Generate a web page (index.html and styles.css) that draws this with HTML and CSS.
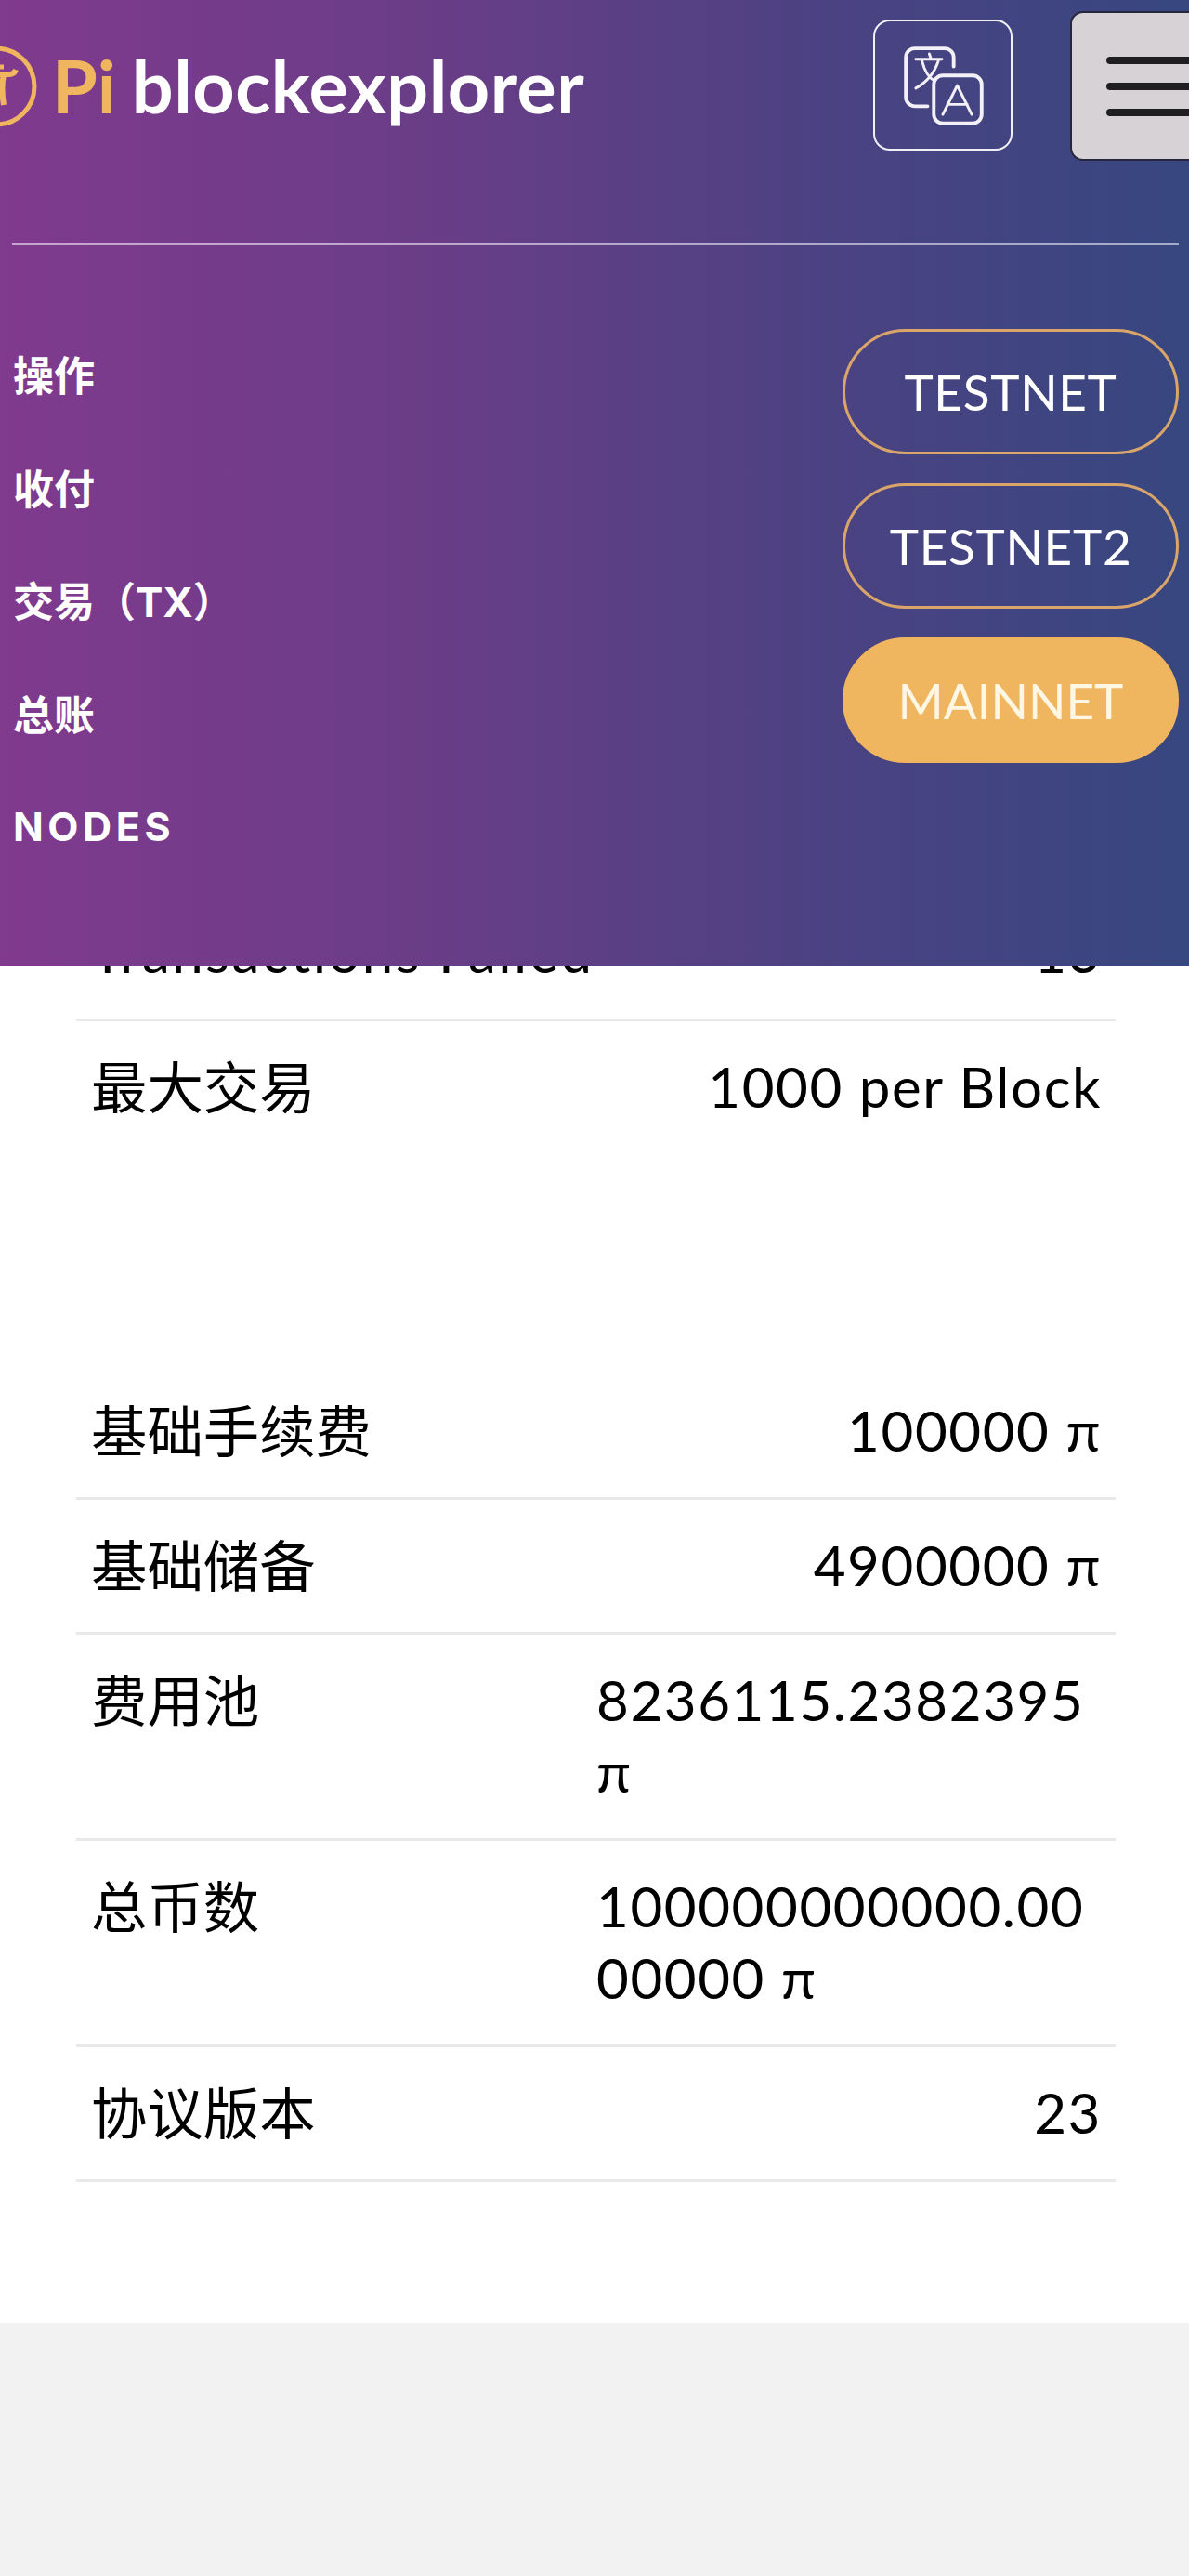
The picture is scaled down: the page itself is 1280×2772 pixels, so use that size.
FILE: index.html
```html
<!DOCTYPE html>
<html lang="zh">
<head>
<meta charset="utf-8">
<title>Pi blockexplorer</title>
<link rel="stylesheet" href="styles.css">
</head>
<body>
<header class="header">
  <div class="topbar">
    <a class="logo">
      <svg class="coin" viewBox="0 0 40 88" width="40" height="88">
        <g fill="none" stroke="#f0b55f">
          <circle cx="-4" cy="44" r="41" stroke-width="5"/>
          <path d="M-6 31H10C14 31 16 29 17 26" stroke-width="6"/>
          <path d="M4 31C2 40 2 52 4 64" stroke-width="6"/>
          <path d="M-4 23H4" stroke-width="5"/>
        </g>
      </svg>
      <span class="logo-pi">Pi</span>
      <span class="logo-name">blockexplorer</span>
    </a>
    <button class="lang" aria-label="language">
      <svg viewBox="0 0 150 141" width="146" height="137">
        <g fill="none" stroke="#f3f0f8" stroke-linecap="round" stroke-linejoin="round">
          <path d="M58 94H44a10 10 0 0 1-10-10V40a10 10 0 0 1 10-10H77a10 10 0 0 1 10 10V50" stroke-width="4"/>
          <rect x="65" y="60" width="53" height="53" rx="10" stroke-width="4"/>
          <path d="M75 103L91 71L107 103M80 92H102" stroke-width="3"/>
          <path d="M45 42H74M60 36L62 42M52 44C55 56 60 63 66 66M70 44C66 56 58 67 45 74" stroke-width="3"/>
        </g>
      </svg>
    </button>
    <button class="burger" aria-label="menu">
      <span class="bar"></span><span class="bar"></span><span class="bar"></span>
    </button>
  </div>
  <div class="rule"></div>
  <div class="menu">
    <nav class="links">
      <a class="link">操作</a>
      <a class="link">收付</a>
      <a class="link">交易（TX）</a>
      <a class="link">总账</a>
      <a class="link link-latin">NODES</a>
    </nav>
    <div class="nets">
      <a class="net">TESTNET</a>
      <a class="net">TESTNET2</a>
      <a class="net net-active">MAINNET</a>
    </div>
  </div>
</header>
<main class="main">
  <section class="card card-first">
    <div class="row"><span class="label label-latin">Transactions Failed</span><span class="value">13</span></div>
    <div class="row row-plain"><span class="label">最大交易</span><span class="value">1000 per Block</span></div>
  </section>
  <section class="card card-second">
    <div class="row"><span class="label">基础手续费</span><span class="value">100000 π</span></div>
    <div class="row"><span class="label">基础储备</span><span class="value">4900000 π</span></div>
    <div class="row"><span class="label">费用池</span><span class="value">8236115.2382395 π</span></div>
    <div class="row"><span class="label">总币数</span><span class="value">100000000000.0000000 π</span></div>
    <div class="row"><span class="label">协议版本</span><span class="value">23</span></div>
  </section>
</main>
</body>
</html>
```

FILE: styles.css
```css
* { box-sizing: border-box; }
html, body { margin: 0; padding: 0; }
body {
  background: #f2f2f2;
  color: #000;
  font-family: Lato, "Noto Sans CJK SC", sans-serif;
  overflow: hidden;
}
.header {
  position: absolute;
  top: 0;
  left: 0;
  width: 1280px;
  height: 1039px;
  overflow: hidden;
  background: linear-gradient(90deg, #803a8e 0%, #6a3d87 35%, #4b4282 70%, #37477f 100%);
}
.topbar {
  display: flex;
  align-items: flex-start;
  height: 262px;
}
.logo {
  display: flex;
  align-items: baseline;
  margin-top: 44px;
  font-size: 79px;
  font-weight: 700;
  line-height: 96px;
}
.coin { align-self: flex-start; margin-top: 5px; margin-right: 16px; }
.logo-pi { color: #f0b55f; margin-right: 17px; }
.logo-name { color: #fff; letter-spacing: 0.5px; }
.lang {
  margin: 21px 0 0 auto;
  width: 150px;
  height: 141px;
  padding: 0;
  background: transparent;
  border: 2px solid #f1eff6;
  border-radius: 18px;
}
.lang svg { display: block; }
.burger {
  display: flex;
  flex-direction: column;
  gap: 20px;
  flex: none;
  margin: 12px -40px 0 62px;
  width: 168px;
  height: 161px;
  padding: 47px 0 0 37px;
  background: #d6d2d6;
  border: 2px solid #26263c;
  border-radius: 14px;
}
.bar {
  display: block;
  width: 100%;
  height: 8px;
  background: #1f1f22;
  border-radius: 4px;
}
.rule {
  height: 2px;
  margin: 0 11px 0 13px;
  background: rgba(255, 255, 255, 0.55);
}
.menu {
  display: flex;
  justify-content: space-between;
  align-items: flex-start;
  padding: 0 11px 0 14px;
}
.links {
  display: flex;
  flex-direction: column;
  padding-top: 80px;
}
.link {
  height: 121.5px;
  line-height: 122px;
  color: #fff;
  font-family: Inter, "Noto Sans CJK SC", sans-serif;
  font-size: 44px;
  font-weight: 700;
}
.link-latin {
  font-size: 43px;
  line-height: 118px;
  letter-spacing: 4.6px;
}
.nets {
  display: flex;
  flex-direction: column;
  gap: 31px;
  padding-top: 90px;
}
.net {
  display: flex;
  align-items: center;
  justify-content: center;
  width: 362px;
  height: 135px;
  border: 3px solid #d9a56a;
  border-radius: 68px;
  color: #fff;
  font-size: 53px;
  letter-spacing: 0.7px;
}
.net-active {
  background: #f0b55f;
  border-color: #f0b55f;
  color: #fff6e4;
  letter-spacing: 0;
}
.main {
  height: 2500px;
  padding: 0 79px 0 82px;
  background: #fff;
  overflow: hidden;
}
.card-first { padding-top: 954px; }
.card-second { padding-top: 228px; }
.row {
  display: flex;
  justify-content: space-between;
  align-items: flex-start;
  gap: 18px;
  padding: 32px 15px 33px 16px;
  border-bottom: 3px solid #e9e9e9;
  font-size: 60px;
  line-height: 77px;
}
.row-plain { border-bottom: none; }
.label { flex: none; font-size: 60.4px; font-weight: 400; }
.label-latin { font-size: 60px; letter-spacing: 2.4px; }
.value {
  max-width: 544px;
  letter-spacing: 1.6px;
  word-break: break-all;
}
```
